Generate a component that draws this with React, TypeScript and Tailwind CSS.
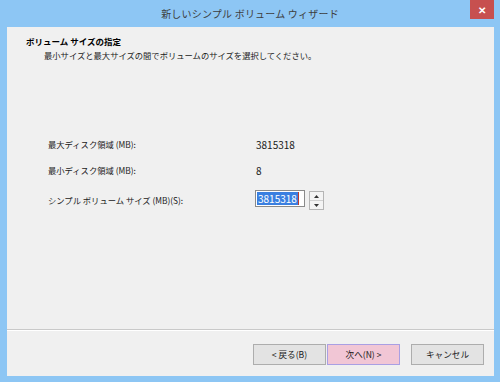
export default function App() {
  const font = { fontFamily: '"Noto Sans CJK JP", "Noto Sans", sans-serif' };
  return (
    <div
      style={font}
      className="w-[500px] h-[382px] bg-[#8dc6f4] flex flex-col text-[#1a1a1a] overflow-hidden"
    >
      {/* title bar */}
      <div className="relative h-[27px] shrink-0 flex items-center justify-center">
        <span className="text-[10px] text-[#3d3d3d] tracking-[0.2px] -mt-[1px]">
          新しいシンプル ボリューム ウィザード
        </span>
        <div className="absolute top-0 right-[6px] w-[24px] h-[19px] bg-[#c7504f] flex items-center justify-center">
          <span className="text-white text-[10px] font-bold leading-none">✕</span>
        </div>
      </div>

      {/* client */}
      <div className="flex-1 ml-[7px] mr-[6px] mb-[6px] bg-[#f0f0f0] flex flex-col">
        {/* header */}
        <div className="h-[58px] shrink-0 pl-[19px] pt-[8px] flex flex-col">
          <div className="text-[8.5px] font-bold leading-[12px] text-black">ボリューム サイズの指定</div>
          <div className="text-[8.3px] leading-[12px] pl-[18px] mt-[2px]">
            最小サイズと最大サイズの間でボリュームのサイズを選択してください。
          </div>
        </div>

        {/* body */}
        <div className="flex-1 flex flex-col pl-[41px] pt-[52px] text-[8.3px]">
          <div className="flex items-center h-[14px]">
            <span className="w-[208px]">最大ディスク領域 (MB):</span>
            <span className="text-[10px]">3815318</span>
          </div>
          <div className="flex items-center h-[14px] mt-[12px]">
            <span className="w-[208px]">最小ディスク領域 (MB):</span>
            <span className="text-[10px]">8</span>
          </div>
          <div className="flex items-center h-[20px] mt-[13px]">
            <span className="w-[207px]">シンプル ボリューム サイズ (MB)(S):</span>
            <div className="flex items-start">
              <div className="w-[50px] h-[17px] bg-white border border-[#8a8a8a] flex items-center px-[1px]">
                <span className="bg-[#3a7fe0] text-white text-[10px] leading-[13px] px-[1px]">3815318</span>
                <span className="w-[1px] h-[13px] bg-[#c0392b]"></span>
              </div>
              <div className="ml-[4px] mt-[1px] w-[15px] h-[19px] border border-[#b5b5b5] bg-[#f4f4f4] flex flex-col">
                <div className="flex-1 flex items-center justify-center border-b border-[#d0d0d0]">
                  <svg width="5" height="3" viewBox="0 0 5 3"><path d="M2.5 0 L5 3 L0 3 Z" fill="#333" /></svg>
                </div>
                <div className="flex-1 flex items-center justify-center">
                  <svg width="5" height="3" viewBox="0 0 5 3"><path d="M0 0 L5 0 L2.5 3 Z" fill="#333" /></svg>
                </div>
              </div>
            </div>
          </div>
        </div>

        {/* separator */}
        <div className="h-[2px] shrink-0 border-t border-[#c9c9c9] border-b border-b-white"></div>

        {/* footer */}
        <div className="h-[45px] shrink-0 flex items-start justify-end pt-[13px] pr-[10px] text-[8.6px]">
          <div className="w-[73px] h-[21px] bg-[#e3e3e3] border border-[#adadad] flex items-center justify-center">
            &lt; 戻る(B)
          </div>
          <div className="ml-[1px] w-[73px] h-[21px] bg-[#f1c6d5] border border-[#a99fe3] flex items-center justify-center">
            次へ(N) &gt;
          </div>
          <div className="ml-[11px] w-[73px] h-[21px] bg-[#e3e3e3] border border-[#adadad] flex items-center justify-center">
            キャンセル
          </div>
        </div>
      </div>
    </div>
  );
}
